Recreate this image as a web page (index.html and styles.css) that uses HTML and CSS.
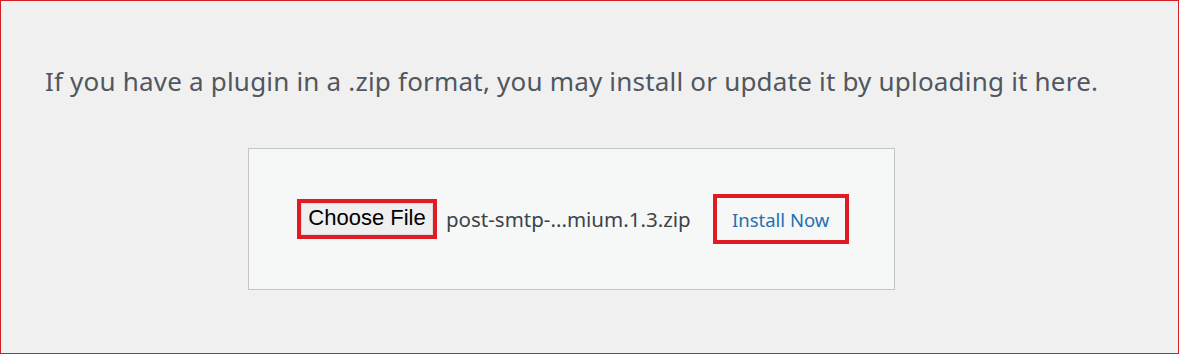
FILE: index.html
```html
<!DOCTYPE html>
<html>
<head>
<meta charset="utf-8">
<link rel="stylesheet" href="styles.css">
</head>
<body>
<div class="frame">
  <p class="intro">If you have a plugin in a .zip format, you may install or update it by uploading it here.</p>
  <div class="upload">
    <div class="row">
      <span class="hl hl-file"><span class="choose">Choose File</span></span>
      <span class="fname">post-smtp-...mium.1.3.zip</span>
      <span class="hl hl-install"><span class="install">Install Now</span></span>
    </div>
  </div>
</div>
</body>
</html>
```
FILE: styles.css
```css
html, body { margin: 0; padding: 0; }
body { width: 1179px; height: 354px; overflow: hidden; }
.frame {
  box-sizing: border-box;
  width: 1179px;
  height: 354px;
  border: 1px solid #d42020;
  background: #f0f0f1;
  padding-top: 62px;
}
.intro {
  margin: 0 0 0 44px;
  font-family: "Noto Sans", "Open Sans", sans-serif;
  font-size: 26px;
  letter-spacing: 0.2px;
  line-height: 36px;
  color: #50575e;
  white-space: nowrap;
}
.upload {
  box-sizing: border-box;
  margin: 49px 0 0 247px;
  width: 647px;
  height: 142px;
  border: 1px solid #c3c4c7;
  background: #f6f7f7;
  display: flex;
  align-items: center;
}
.row {
  display: flex;
  align-items: center;
  margin-left: 48px;
}
.hl {
  box-sizing: border-box;
  border: 4px solid #e01b24;
  display: flex;
  align-items: center;
}
.hl-file { width: 140px; height: 40px; }
.choose {
  flex: 1;
  height: 32px;
  box-sizing: border-box;
  background: #efefef;
  border: 1px solid #dcdcdc;
  font-family: "Liberation Sans", Arial, sans-serif;
  font-size: 22px;
  color: #000;
  line-height: 28px;
  text-align: center;
}
.fname {
  margin-left: 9px;
  font-family: "Noto Sans", "Open Sans", sans-serif;
  font-size: 20.5px;
  color: #3c434a;
}
.hl-install {
  margin-left: 22px;
  width: 136px;
  height: 50px;
  justify-content: center;
}
.install {
  font-family: "Noto Sans", "Open Sans", sans-serif;
  font-size: 18.5px;
  color: #2271b1;
}
```
